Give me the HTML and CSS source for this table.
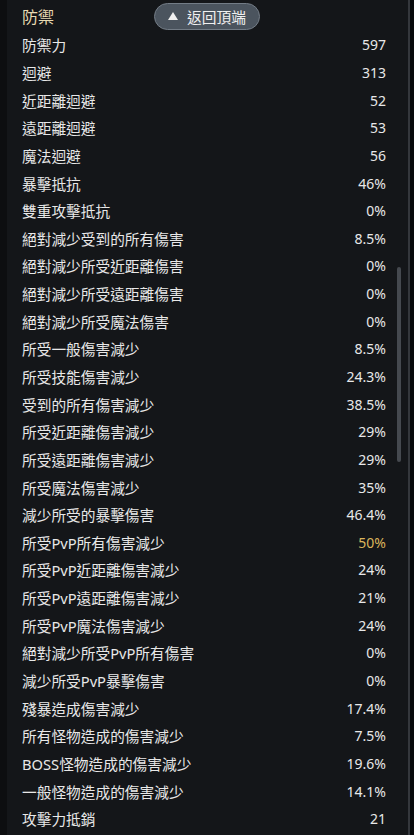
FILE: index.html
```html
<!DOCTYPE html>
<html lang="zh-Hant">
<head>
<meta charset="utf-8">
<link rel="stylesheet" href="styles.css">
</head>
<body>
<div class="frame">
  <div class="edge"></div>
  <div class="panel">
    <div class="title">防禦</div>
    <div class="row"><span>防禦力</span><span class="v">597</span></div>
    <div class="row"><span>迴避</span><span class="v">313</span></div>
    <div class="row"><span>近距離迴避</span><span class="v">52</span></div>
    <div class="row"><span>遠距離迴避</span><span class="v">53</span></div>
    <div class="row"><span>魔法迴避</span><span class="v">56</span></div>
    <div class="row"><span>暴擊抵抗</span><span class="v">46%</span></div>
    <div class="row"><span>雙重攻擊抵抗</span><span class="v">0%</span></div>
    <div class="row"><span>絕對減少受到的所有傷害</span><span class="v">8.5%</span></div>
    <div class="row"><span>絕對減少所受近距離傷害</span><span class="v">0%</span></div>
    <div class="row"><span>絕對減少所受遠距離傷害</span><span class="v">0%</span></div>
    <div class="row"><span>絕對減少所受魔法傷害</span><span class="v">0%</span></div>
    <div class="row"><span>所受一般傷害減少</span><span class="v">8.5%</span></div>
    <div class="row"><span>所受技能傷害減少</span><span class="v">24.3%</span></div>
    <div class="row"><span>受到的所有傷害減少</span><span class="v">38.5%</span></div>
    <div class="row"><span>所受近距離傷害減少</span><span class="v">29%</span></div>
    <div class="row"><span>所受遠距離傷害減少</span><span class="v">29%</span></div>
    <div class="row"><span>所受魔法傷害減少</span><span class="v">35%</span></div>
    <div class="row"><span>減少所受的暴擊傷害</span><span class="v">46.4%</span></div>
    <div class="row"><span>所受PvP所有傷害減少</span><span class="v gold">50%</span></div>
    <div class="row"><span>所受PvP近距離傷害減少</span><span class="v">24%</span></div>
    <div class="row"><span>所受PvP遠距離傷害減少</span><span class="v">21%</span></div>
    <div class="row"><span>所受PvP魔法傷害減少</span><span class="v">24%</span></div>
    <div class="row"><span>絕對減少所受PvP所有傷害</span><span class="v">0%</span></div>
    <div class="row"><span>減少所受PvP暴擊傷害</span><span class="v">0%</span></div>
    <div class="row"><span>殘暴造成傷害減少</span><span class="v">17.4%</span></div>
    <div class="row"><span>所有怪物造成的傷害減少</span><span class="v">7.5%</span></div>
    <div class="row"><span>BOSS怪物造成的傷害減少</span><span class="v">19.6%</span></div>
    <div class="row"><span>一般怪物造成的傷害減少</span><span class="v">14.1%</span></div>
    <div class="row"><span>攻擊力抵銷</span><span class="v">21</span></div>
    <div class="scrollbar"></div>
  </div>
  <div class="border"></div>
</div>
<button class="totop"><span class="tri"></span>返回頂端</button>
</body>
</html>
```

FILE: styles.css
```css
html, body {
  margin: 0;
  padding: 0;
  background: #08090a;
  height: 835px;
  overflow: hidden;
}
body {
  font-family: "Noto Sans", "Noto Sans CJK TC", sans-serif;
  color: #e8e8e8;
}
.frame {
  display: flex;
  height: 835px;
}
.edge {
  width: 7px;
  background: #0d0e10;
}
.panel {
  position: relative;
  width: 401px;
  background: #141619;
}
.border {
  width: 2px;
  background: #34373c;
}
.title {
  height: 31px;
  padding: 6px 0 0 15px;
  box-sizing: border-box;
  font-size: 16px;
  line-height: 22px;
  color: #e9dbb3;
}
.row {
  display: flex;
  justify-content: space-between;
  align-items: center;
  height: 27.65px;
  padding: 0 22px 0 15px;
  font-size: 14.7px;
}
.v {
  font-size: 14px;
}
.gold {
  color: #dbb55c;
}
.scrollbar {
  position: absolute;
  left: 390px;
  top: 267px;
  width: 4px;
  height: 195px;
  background: #45494f;
  border-radius: 2px;
}
.totop {
  position: absolute;
  left: 154px;
  top: 3px;
  width: 106px;
  height: 27px;
  border: 1px solid #737c86;
  border-radius: 14px;
  background: #4b545e;
  color: #f0f0f0;
  font-family: "Noto Sans CJK TC", sans-serif;
  font-size: 14.7px;
  display: flex;
  align-items: center;
  justify-content: center;
  gap: 9px;
  padding: 0;
}
.tri {
  width: 0;
  height: 0;
  border-left: 5.5px solid transparent;
  border-right: 5.5px solid transparent;
  border-bottom: 8px solid #f0f0f0;
  margin-top: -1px;
}
```
